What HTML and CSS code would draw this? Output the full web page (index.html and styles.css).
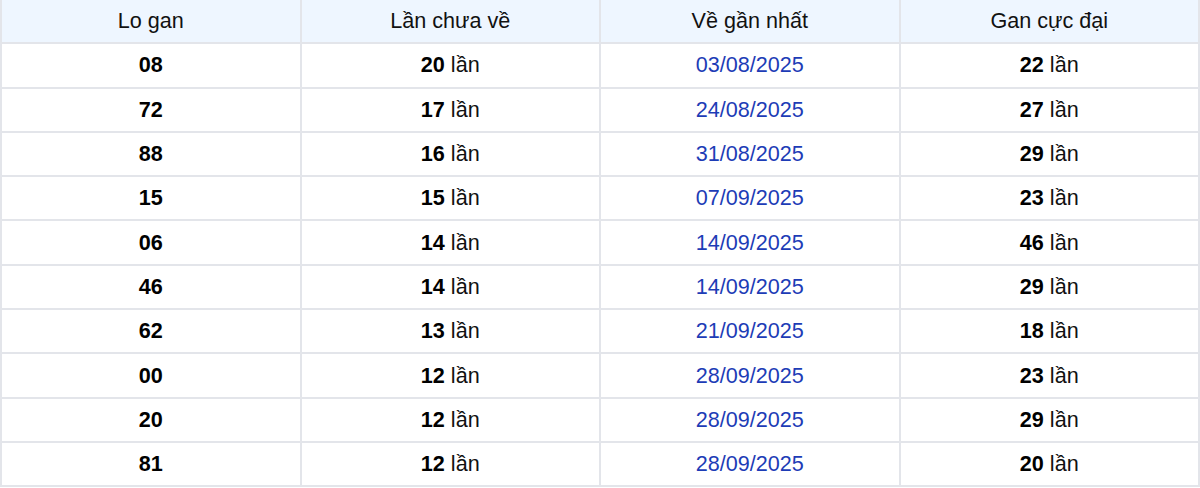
FILE: index.html
```html
<!DOCTYPE html>
<html lang="vi">
<head>
<meta charset="utf-8">
<title>Lo gan</title>
<link rel="stylesheet" href="styles.css">
</head>
<body>
<table class="gan-table">
  <thead>
    <tr><th>Lo gan</th><th>Lần chưa về</th><th>Về gần nhất</th><th>Gan cực đại</th></tr>
  </thead>
  <tbody>
    <tr><td><b>08</b></td><td><b>20</b> lần</td><td class="date">03/08/2025</td><td><b>22</b> lần</td></tr>
    <tr><td><b>72</b></td><td><b>17</b> lần</td><td class="date">24/08/2025</td><td><b>27</b> lần</td></tr>
    <tr><td><b>88</b></td><td><b>16</b> lần</td><td class="date">31/08/2025</td><td><b>29</b> lần</td></tr>
    <tr><td><b>15</b></td><td><b>15</b> lần</td><td class="date">07/09/2025</td><td><b>23</b> lần</td></tr>
    <tr><td><b>06</b></td><td><b>14</b> lần</td><td class="date">14/09/2025</td><td><b>46</b> lần</td></tr>
    <tr><td><b>46</b></td><td><b>14</b> lần</td><td class="date">14/09/2025</td><td><b>29</b> lần</td></tr>
    <tr><td><b>62</b></td><td><b>13</b> lần</td><td class="date">21/09/2025</td><td><b>18</b> lần</td></tr>
    <tr><td><b>00</b></td><td><b>12</b> lần</td><td class="date">28/09/2025</td><td><b>23</b> lần</td></tr>
    <tr><td><b>20</b></td><td><b>12</b> lần</td><td class="date">28/09/2025</td><td><b>29</b> lần</td></tr>
    <tr><td><b>81</b></td><td><b>12</b> lần</td><td class="date">28/09/2025</td><td><b>20</b> lần</td></tr>
  </tbody>
</table>
</body>
</html>
```
FILE: styles.css
```css
html, body {
  margin: 0;
  padding: 0;
  background: #ffffff;
}
body {
  font-family: "Liberation Sans", Arial, sans-serif;
  color: #111111;
}
.gan-table {
  width: 1200px;
  border-collapse: collapse;
  table-layout: fixed;
  font-size: 21.6px;
}
.gan-table th,
.gan-table td {
  border: 2px solid #e3e5ea;
  text-align: center;
  height: 42.3px;
  padding: 0;
  line-height: 24px;
}
.gan-table th {
  border-top: none;
  font-weight: normal;
  background: #eef6ff;
  color: #111111;
}
.gan-table b {
  font-weight: bold;
  color: #000000;
}
.gan-table .date {
  color: #1d3cb6;
}
```
